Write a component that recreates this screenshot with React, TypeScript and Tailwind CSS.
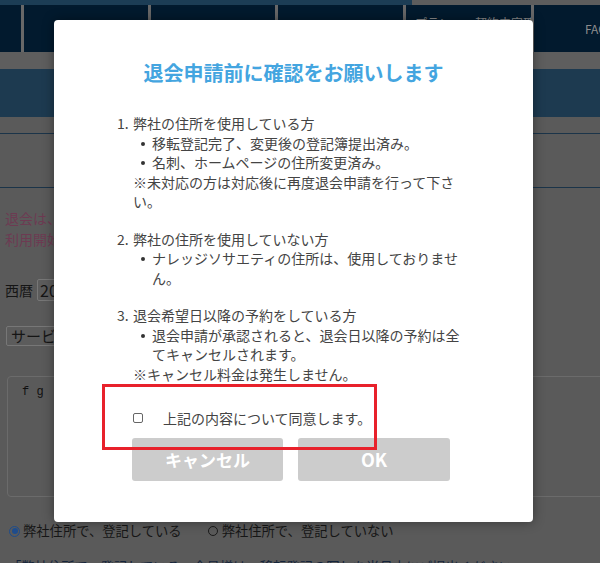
import React from "react";

const jp = "font-['Noto_Sans_CJK_JP','Noto_Sans',sans-serif]";

interface ItemProps {
  n: string;
  title: string;
  bullets: string[];
  note?: string;
  last?: boolean;
}

const Item = ({ n, title, bullets, note, last }: ItemProps) => {
  return (
    <div className={`flex ${last ? "" : "mb-[18px]"}`}>
      <span className="w-[16px] shrink-0">{n}</span>
      <div className="flex-1">
        <p>{title}</p>
        {bullets.map((b) => (
          <div key={b} className="flex">
            <span className="w-[19px] shrink-0 flex pt-[8px]">
              <span className="ml-[8px] w-[4px] h-[4px] rounded-full bg-[#333]" />
            </span>
            <p className="flex-1">{b}</p>
          </div>
        ))}
        {note && <p>{note}</p>}
      </div>
    </div>
  );
};

const NavCell = ({ className, children }: { className: string; children?: React.ReactNode }) => (
  <div className={`${className} shrink-0 h-full overflow-hidden bg-[#021a2e] flex items-center text-[12px] leading-[16px] text-[#8c8c8c] whitespace-nowrap`}>
    {children}
  </div>
);

export default function App() {
  return (
    <div className={`relative w-[600px] h-[563px] overflow-hidden bg-[#5a5a5a] ${jp}`}>
      {/* dimmed page behind the dialog */}
      <div className="h-[5px] flex bg-[#5d5d5d]">
        <div className="w-[412px] bg-[#1c3d55]" />
      </div>
      <div className="h-[47px] flex gap-[3px] bg-[#686868]">
        <NavCell className="w-[21px]" />
        <NavCell className="w-[124px] justify-center">会員情報</NavCell>
        <NavCell className="w-[124px] justify-center">予約</NavCell>
        <NavCell className="w-[125px] justify-center">請求</NavCell>
        <NavCell className="w-[125px] pl-[9px]">
          <span className="pt-[4px]">
            プラン・　契約内容確認
            <br />
            変更
          </span>
        </NavCell>
        <NavCell className="w-[66px] pl-[51px]">FAQ</NavCell>
      </div>
      <div className="h-[17px] bg-[#5e5e5e]" />
      <div className="h-[48px] bg-[#1d3a50]" />
      <div className="h-[16px]" />
      <div className="h-[1px] bg-[#1b3449]" />
      <div className="h-[53px]" />
      <div className="h-[1px] bg-[#1b3449]" />

      <div className="pl-[5px] pt-[20px] text-[14px] leading-[21px] text-[#6d3a52] whitespace-nowrap">
        <p>退会は、退会希望月の前月末日までにお申し込みください。</p>
        <p>利用開始日より6ヶ月未満の退会はできません。</p>
      </div>

      <div className="pl-[5px] mt-[29px] flex items-center gap-[4px] h-[22px] text-[14px] text-[#151515]">
        <span>西暦</span>
        <span className="h-[22px] w-[60px] border border-[#777] rounded-[2px] bg-[#5c5c5c] text-[16px] leading-[20px] px-[2px]">2024</span>
        <span>年</span>
      </div>

      <div className="pl-[6px] mt-[25px]">
        <div className="h-[20px] w-[160px] border border-[#777] rounded-[2px] bg-[#5c5c5c] text-[15px] leading-[18px] px-[4px] text-[#151515] whitespace-nowrap">
          サービス選択
        </div>
      </div>

      <div className="ml-[7px] mt-[30px] h-[121px] w-[640px] border border-[#6b6b6b] rounded-[4px] px-[14px] pt-[6px] text-[12px] text-[#111] font-['Liberation_Mono',monospace]">
        f g
      </div>

      <div className="pl-[9px] mt-[24px] flex items-center h-[20px] text-[13.3px] text-[#161616] whitespace-nowrap">
        <span className="w-[11px] h-[11px] rounded-full border border-[#1e4c8c] flex items-center justify-center">
          <span className="w-[6px] h-[6px] rounded-full bg-[#1e4c8c]" />
        </span>
        <span className="ml-[3px]">弊社住所で、登記している</span>
        <span className="ml-[26px] w-[10px] h-[10px] rounded-full border border-[#1a1a1a]" />
        <span className="ml-[4px]">弊社住所で、登記していない</span>
      </div>
      <div className="pl-[8px] mt-[16px] text-[13.3px] text-[#14243a] whitespace-nowrap">
        「弊社住所で、登記している」会員様は、移転登記の写しを当月中にご提出ください。
      </div>

      {/* dialog */}
      <div className="absolute left-[54px] top-[20px] w-[479px] h-[502px] bg-white rounded-[4px] shadow-[0_0_12px_rgba(0,0,0,0.4)]">
        <h2 className="pt-[38px] text-center text-[20px] leading-[30px] font-bold text-[#44a5e0]">
          退会申請前に確認をお願いします
        </h2>

        <div className="ml-[63px] mt-[26px] w-[349px] text-[14px] leading-[19.5px] text-[#444]">
          <Item
            n="1."
            title="弊社の住所を使用している方"
            bullets={["移転登記完了、変更後の登記簿提出済み。", "名刺、ホームページの住所変更済み。"]}
            note="※未対応の方は対応後に再度退会申請を行って下さい。"
          />
          <Item n="2." title="弊社の住所を使用していない方" bullets={["ナレッジソサエティの住所は、使用しておりません。"]} />
          <Item
            n="3."
            title="退会希望日以降の予約をしている方"
            bullets={["退会申請が承認されると、退会日以降の予約は全てキャンセルされます。"]}
            note="※キャンセル料金は発生しません。"
            last
          />
        </div>

        <label className="ml-[79px] mt-[24px] flex items-center h-[20px] text-[14px] text-[#444]">
          <span className="w-[10px] h-[10px] border border-[#666] rounded-[2px]" />
          <span className="ml-[20px]">上記の内容について同意します。</span>
        </label>

        <div className="ml-[78px] mt-[10px] flex gap-[15px]">
          <button className="w-[151px] h-[43px] rounded-[3px] bg-[#cccccc] text-white text-[17px] font-bold">キャンセル</button>
          <button className="w-[152px] h-[43px] rounded-[3px] bg-[#cccccc] text-white text-[18px] font-bold">OK</button>
        </div>

        {/* red annotation frame */}
        <div className="absolute left-[48px] top-[364px] w-[275px] h-[66px] border-[3px] border-[#e8212b]" />
      </div>
    </div>
  );
}
